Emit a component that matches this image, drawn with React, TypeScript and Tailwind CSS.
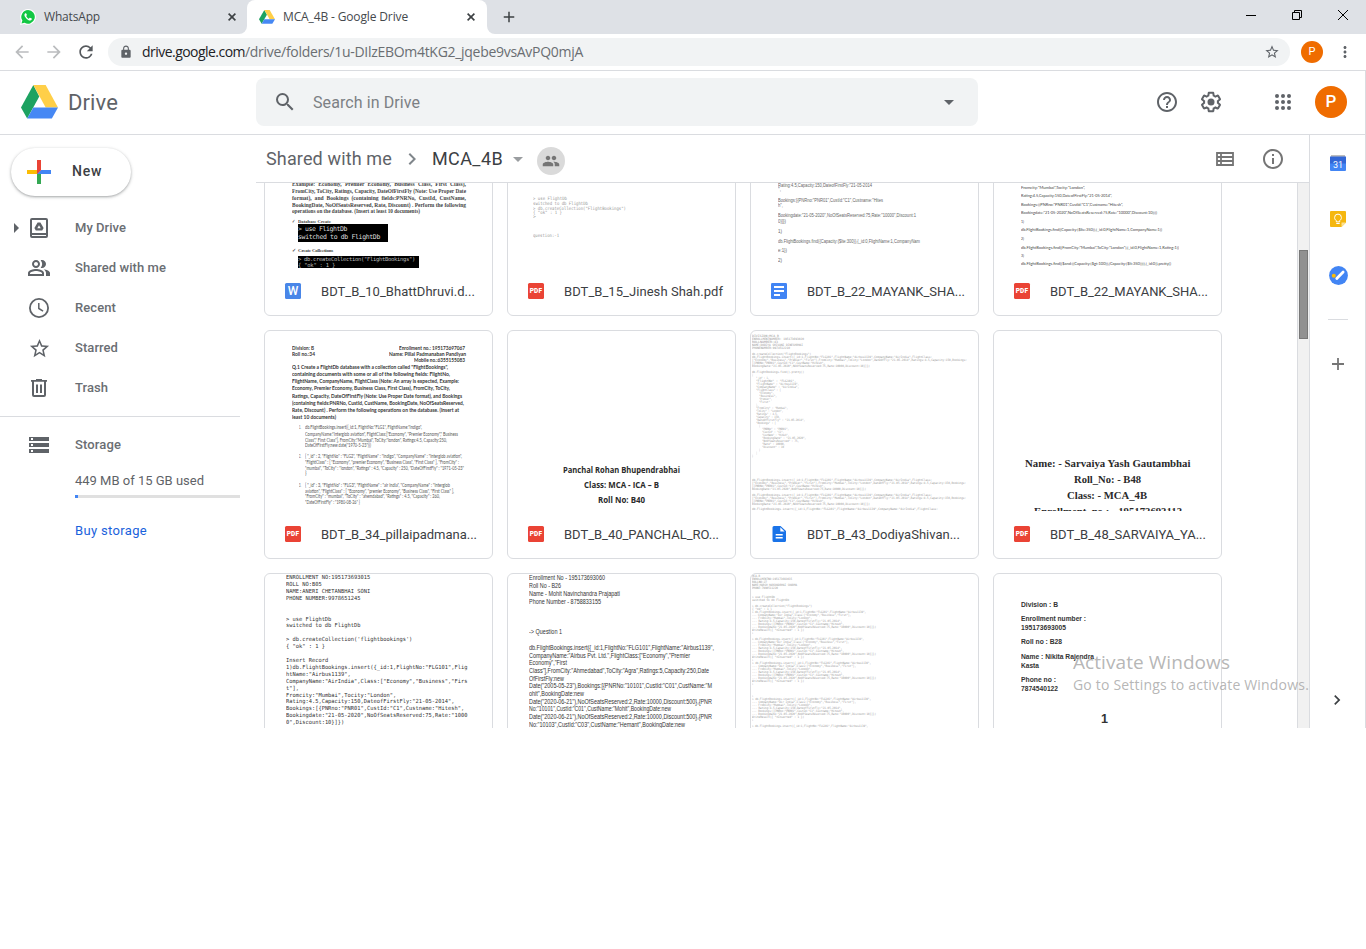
import { useLayoutEffect, useRef, type ReactNode } from "react";
import {
  MdAdd,
  MdArrowBack,
  MdArrowDropDown,
  MdArrowForward,
  MdChevronRight,
  MdHelpOutline,
  MdLock,
  MdMoreVert,
  MdOutlineInfo,
  MdOutlinePeopleAlt,
  MdPeople,
  MdRefresh,
  MdSearch,
  MdStarBorder,
  MdStorage,
} from "react-icons/md";

type FitMode = "track" | "scale" | "words";

/** A single line of text fitted to a given width by tracking, scaling or word spacing. */
function Fit({
  w,
  className = "",
  mode = "track",
  children,
}: {
  w: number;
  className?: string;
  mode?: FitMode;
  children: string;
}) {
  const ref = useRef<HTMLSpanElement>(null);
  useLayoutEffect(() => {
    const el = ref.current;
    if (!el) return;
    el.style.letterSpacing = "0px";
    el.style.wordSpacing = "0px";
    el.style.transform = "none";
    const natural = el.getBoundingClientRect().width;
    const spaces = children.split(" ").length - 1;
    if (mode === "words" && spaces > 0 && natural < w) el.style.wordSpacing = `${(w - natural) / spaces}px`;
    else if (mode !== "track") el.style.transform = `scaleX(${w / natural})`;
    else el.style.letterSpacing = `${(w - natural) / children.length}px`;
  }, [w, mode, children]);
  return (
    <span ref={ref} className={`inline-block origin-left whitespace-pre ${className}`}>
      {children}
    </span>
  );
}

/** [centre y, x, width, text, extra classes] */
type Line = [number, number, number, string, string?];

function Doc({ lines, lh, className, mode = "scale" }: { lines: Line[]; lh: number; className: string; mode?: FitMode }) {
  let bottom = 0;
  return (
    <div className={`flow-root h-[180px] w-full overflow-hidden ${className}`}>
      {lines.map(([y, x, w, text, extra], i) => {
        const top = y - lh / 2;
        const gap = top - bottom;
        bottom = top + lh;
        return (
          <div key={i} className="flex" style={{ marginTop: gap, marginLeft: x, height: lh, lineHeight: `${lh}px` }}>
            <Fit w={w} mode={mode} className={extra}>
              {text}
            </Fit>
          </div>
        );
      })}
    </div>
  );
}

const bhatt: Line[] = [
  [96.5, 27, 174, "Example: Economy, Premier Economy, Business Class, First Class),"],
  [103, 27, 174, "FromCity, ToCity, Ratings, Capacity, DateOfFirstFly (Note: Use Proper Date"],
  [110, 27, 174, "format), and Bookings (containing fields:PNRNo, CustId, CustName,"],
  [117, 27, 174, "BookingDate, NoOfSeatsReserved, Rate, Discount) . Perform the following"],
  [123.5, 27, 128, "operations on the database. (Insert at least 10 documents)"],
  [133.5, 27, 3, "✓", "text-[5px]"],
  [133.5, 33, 33, "Database Create", "text-[5px]"],
];

const jinesh: Line[] = [
  [110, 25, 34, "> use FlightDb"],
  [115, 25, 55, "switched to db FlightDb"],
  [120, 25, 93, '> db.createCollection("FlightBookings")'],
  [124, 25, 29, '{ "ok" : 1 }'],
  [128.5, 25, 3, ">"],
  [147, 25, 26, "question:-1"],
];

const mayankDoc: Line[] = [
  [97, 26.5, 94, 'Rating:4.5,Capacity:150,DateofFirstFly:"21-05-2014'],
  [101.5, 26.5, 3, '",'],
  [112, 26.5, 105, 'Bookings:[{PNRno:"PNR01",CustId:"C1",Custname:"Hites'],
  [117, 26.5, 5, 'h",'],
  [127.5, 26.5, 138, 'Bookingdate:"21-05-2020",NoOfSeatsReserved:75,Rate:"10000",Discount:1'],
  [133, 26.5, 8, "0}]})"],
  [143, 26.5, 4, "1)"],
  [153, 26.5, 142, "db.FlightBookings.find({Capacity:{$lte:300}},{_id:0,FlightName:1,CompanyNam"],
  [162.5, 26.5, 9, "e:1})"],
  [172, 26.5, 4, "2)"],
];

const mayankPdf: Line[] = [
  [99, 27, 64, 'Fromcity:"Mumbai",Tocity:"London",'],
  [107.5, 27, 91, 'Rating:4.5,Capacity:150,DateofFirstFly:"21-05-2014",'],
  [116, 27, 102, 'Bookings:[{PNRno:"PNR01",CustId:"C1",Custname:"Hitesh",'],
  [124.5, 27, 136, 'Bookingdate:"21-05-2020",NoOfSeatsReserved:75,Rate:"10000",Discount:10}]})'],
  [133, 27, 3, "1)"],
  [141.5, 27, 141, "db.FlightBookings.find({Capacity:{$lte:350}},{_id:0,FlightName:1,CompanyName:1})"],
  [150, 27, 3, "2)"],
  [159, 27, 158, 'db.FlightBookings.find({FromCity:"Mumbai",ToCity:"London"},{_id:0,FlightName:1,Rating:1})'],
  [167, 27, 3, "3)"],
  [175.5, 27, 150, "db.FlightBookings.find({$and:[{Capacity:{$gt:100}},{Capacity:{$lt:350}}]},{_id:0}).pretty()"],
];

const thin = "font-normal text-[5px] text-[#555]";

const pillai: Line[] = [
  [17, 26.5, 22, "Division: B"],
  [17, 134, 66, "Enrollment no.: 195173697067"],
  [23.3, 26.5, 23, "Roll no.:34"],
  [23.3, 123.7, 77, "Name: Pillai Padmanaban Pandiyan"],
  [29.3, 149, 51, "Mobile no.:6355155083"],
  [36, 26.5, 156, 'Q.1 Create a FlightDb database with a collection called "FlightBookings",'],
  [43, 26.5, 158, "containing documents with some or all of the following fields: FlightNo,"],
  [50.3, 26.5, 167, "FlightName, CompanyName, FlightClass (Note: An array is expected, Example:"],
  [57.3, 26.5, 158, "Economy, Premier Economy, Business Class, First Class), FromCity, ToCity,"],
  [65, 26.5, 170, "Ratings, Capacity, DateOfFirstFly (Note: Use Proper Date format), and Bookings"],
  [72, 26.5, 172, "(containing fields:PNRNo, CustId, CustName, BookingDate, NoOfSeatsReserved,"],
  [79.3, 26.5, 167, "Rate, Discount) . Perform the following operations on the database. (Insert at"],
  [87, 26.5, 44, "least 10 documents)"],
  [97, 34, 2, "1.", thin],
  [97, 39.7, 117, 'db.FlightBookings.insert({_id:1, FlightNo:"FLG1", FlightName:"Indigo",', thin],
  [103.3, 39.7, 153, 'CompanyName:"Interglob aviation", FlightClass:["Economy", "Premier Economy"," Business', thin],
  [109.3, 39.7, 142, 'Class"," First Class"], FromCity:"Mumbai", ToCity:"london", Ratings:4.5, Capacity:250,', thin],
  [114.5, 39.7, 66, 'DateOfFirstFly:new date("1970-5-23")})', thin],
  [125.7, 34, 2, "2.", thin],
  [125.7, 39.7, 157, '{ "_id" : 2, "FlightNo" : "FLG2", "FlightName" : "Indigo", "CompanyName" : "Interglob aviation",', thin],
  [131.3, 39.7, 154, '"FlightClass" : [ "Economy", "premier Economy", "Business Class", "First Class" ], "FromCity" :', thin],
  [137, 39.7, 159, '"mumbai", "ToCity" : "london", "Ratings" : 4.5, "Capacity" : 250, "DateOfFirstFly" : "1971-05-23"', thin],
  [142.7, 39.7, 1.5, "}", thin],
  [154.7, 34, 2, "3.", thin],
  [154.7, 39.7, 145, '{ "_id" : 3, "FlightNo" : "FLG3", "FlightName" : "air India", "CompanyName" : "Interglob', thin],
  [160, 39.7, 149, 'aviation", "FlightClass" : [ "Economy", "premier Economy", "Business Class", "First Class" ],', thin],
  [165.7, 39.7, 135, '"FromCity" : "mumbai", "ToCity" : "ahemdabad", "Ratings" : 4.5, "Capacity" : 260,', thin],
  [171.3, 39.7, 55, '"DateOfFirstFly" : "1980-08-26" }', thin],
];

const panchal: Line[] = [
  [139, 55, 117, "Panchal Rohan Bhupendrabhai"],
  [154, 75.5, 75, "Class: MCA - ICA – B"],
  [169, 90, 47, "Roll No: B40"],
];

const insertA = 'db.FlightBookings.insert({_id:1,FlightNo:"FLG101",FlightName:"Airbus1139",CompanyName:"AirIndia",FlightClass:';
const insertB =
  '["Economy","Business","Premier","First"],FromCity:"Mumbai",ToCity:"London",DateOfFly:"21-05-2014",Ratings:4.5,Capacity:150,Bookings:';
const insertC = '[{PNRNo:"PNR01",CustId:"C1",CustName:"Hitesh",';
const insertD = 'BookingDate:"21-05-2020",NoOfSeatsReserved:75,Rate:10000,Discount:10}]})';

const dodiya: Line[] = [
  [5.3, 1.3, 27, "DIVISION:MCA_B"],
  [8.3, 1.3, 52, "ENROLLMENTNUMBER: 195173693020"],
  [11.3, 1.3, 26, "ROLLNUMBER:43"],
  [14.7, 1.3, 51, "NAME:DODIYA SHIVANI DINESHBHAI"],
  [17.7, 1.3, 38, "PHONENUMBER:9974512210"],
  [23.3, 1.3, 59, 'db.createCollection("FlightBookings")'],
  [26.3, 1.3, 180, insertA],
  [29.3, 1.3, 215, insertB],
  [32.3, 1.3, 73, insertC],
  [35.7, 1.3, 118, insertD],
  [41.3, 1.3, 52, "db.FlightBookings.find().pretty()"],
  [44.3, 1.3, 1, "{"],
  [47.3, 4.7, 13, '"_id" : 1,'],
  [50.3, 4.7, 40, '"FlightNo" : "FLG101",'],
  [53.3, 4.7, 43, '"FlightName" : "Airbus1139",'],
  [56.3, 4.7, 43, '"CompanyName" : "AirIndia",'],
  [59.3, 4.7, 25, '"FlightClass" : ['],
  [62.3, 8, 15, '"Economy",'],
  [65.3, 8, 18, '"Business",'],
  [68.3, 8, 13, '"Premier",'],
  [71.3, 8, 11, '"First"'],
  [74.3, 4.7, 2, "],"],
  [77.3, 4.7, 32, '"FromCity" : "Mumbai",'],
  [80.3, 4.7, 27, '"ToCity" : "London",'],
  [83.3, 4.7, 22, '"Ratings" : 4.5,'],
  [86.3, 4.7, 24, '"Capacity" : 150,'],
  [89.3, 4.7, 49, '"DateOfFirstFly" : "21-05-2014",'],
  [92.3, 4.7, 20, '"Bookings" : ['],
  [95.3, 8, 1, "{"],
  [98.3, 11.3, 27, '"PNRNo" : "PNR01",'],
  [101.3, 11.3, 22, '"CustId" : "C1",'],
  [104.3, 11.3, 27, '"CustName" : "Hitesh",'],
  [107.3, 11.3, 44, '"BookingDate" : "21-05-2020",'],
  [110.3, 11.3, 37, '"NoOfSeatsReserved" : 75,'],
  [113.3, 11.3, 23, '"Rate" : 10000,'],
  [116.3, 11.3, 22, '"Discount" : 10'],
  [119.3, 8, 1, "}"],
  [122.3, 4.7, 1, "]"],
  [125.3, 1.3, 1, "}"],
  [149.3, 1.3, 180, insertA],
  [152.3, 1.3, 214, insertB],
  [155.3, 1.3, 73, insertC],
  [158.3, 1.3, 114, insertD],
  [164.3, 1.3, 180, insertA],
  [167.3, 1.3, 214, insertB],
  [170.3, 1.3, 73, insertC],
  [173.3, 1.3, 118, insertD],
  [178.3, 1.3, 186, insertA],
];

const sarvaiya: Line[] = [
  [131.5, 30.7, 165.5, "Name: - Sarvaiya Yash Gautambhai"],
  [147.5, 80, 67, "Roll_No: - B48"],
  [164, 73.3, 80, "Class: - MCA_4B"],
  [180, 40, 148, "Enrollment_no.: - 195173693113"],
];

const aneri: Line[] = (
  [
    [3.3, "ENROLLMENT NO:195173693015"],
    [10, "ROLL NO:B05"],
    [17, "NAME:ANERI CHETANBHAI SONI"],
    [24, "PHONE NUMBER:9978651245"],
    [45, "> use FlightDb"],
    [51.7, "switched to db FlightDb"],
    [65.3, "> db.createCollection('flightbookings')"],
    [72.7, '{ "ok" : 1 }'],
    [86.3, "Insert Record"],
    [93.3, '1)db.FlightBookings.insert({_id:1,FlightNo:"FLG101",Flig'],
    [100, 'htName:"Airbus1139",'],
    [107, 'CompanyName:"AirIndia",Class:["Economy","Business","Firs'],
    [114, 't"],'],
    [121, 'Fromcity:"Mumbai",Tocity:"London",'],
    [127.7, 'Rating:4.5,Capacity:150,DateofFirstFly:"21-05-2014",'],
    [134.7, 'Bookings:[{PNRno:"PNR01",CustId:"C1",Custname:"Hitesh",'],
    [141.7, 'Bookingdate:"21-05-2020",NoOfSeatsReserved:75,Rate:"1000'],
    [148.7, '0",Discount:10}]})'],
  ] as [number, string][]
).map(([y, t]) => [y, 21, t.length * 3.24, t]);

const mohit: Line[] = [
  [4, 21, 76, "Enrollment No - 195173693060"],
  [12, 21, 32, "Roll No - B26"],
  [20, 21, 91, "Name - Mohit Navinchandra Prajapati"],
  [27.7, 21, 72, "Phone Number - 8758833155"],
  [58.3, 21, 33, "-> Question 1"],
  [74, 21, 185, 'db.FlightBookings.insert({_id:1,FlightNo:"FLG101",FlightName:"Airbus1139",'],
  [81.7, 21, 161, 'CompanyName:"Airbus Pvt. Ltd.",FlightClass:["Economy","Premier'],
  [89.3, 21, 38, 'Economy","First'],
  [97, 21, 180, 'Class"],FromCity:"Ahmedabad",ToCity:"Agra",Ratings:5,Capacity:250,Date'],
  [104.7, 21, 35, "OfFirstFly:new"],
  [112.3, 21, 183, 'Date("2005-05-23"),Bookings:[{PNRNo:"10101",CustId:"C01",CustName:"M'],
  [120.3, 21, 55, 'ohit",BookingDate:new'],
  [127.7, 21, 183, 'Date("2020-06-21"),NoOfSeatsReserved:2,Rate:10000,Discount:500},{PNR'],
  [135.3, 21, 142, 'No:"10101",CustId:"C01",CustName:"Mohit",BookingDate:new'],
  [143, 21, 183, 'Date("2020-06-21"),NoOfSeatsReserved:2,Rate:10000,Discount:500},{PNR'],
  [150.5, 21, 156, 'No:"10103",CustId:"C03",CustName:"Hemant",BookingDate:new'],
];

function shellBlock(y: number, head: number): Line[] {
  return [
    [y, 1.3, head, '> db.FlightBookings.insert({_id:1,FlightNo:"FLG101",FlightName:"Airbus1139",'],
    [y + 3, 1.3, head - 15, '... CompanyName:"Air India",Class:["Economy","Business","First"],'],
    [y + 6, 1.3, 60, '... FromCity:"Mumbai",ToCity:"London",'],
    [y + 9, 1.3, 90, '... Rating:4.5,Capacity:150,DateofFirstFly:"21-05-2014",'],
    [y + 12, 1.3, 92, '... Bookings:[{PNRno:"PNR01",CustId:"C1",Custname:"Hitesh",'],
    [y + 15, 1.3, 124, '... Bookingdate:"21-05-2020",NoOfSeatsReserved:75,Rate:"10000",Discount:10}]})'],
    [y + 18, 1.3, 52, 'WriteResult({ "nInserted" : 1 })'],
    [y + 21, 1.3, 1, ">"],
  ];
}

const shellLog: Line[] = [
  [2.3, 1.3, 8, "MCA-B"],
  [5.3, 1.3, 40, "ENROLLMENTNO:195173693035"],
  [8.3, 1.3, 15, "ROLLNO:27"],
  [11.3, 1.3, 45, "NAME:HARSH HARSHADBHAI SHARMA"],
  [14.3, 1.3, 26, "PHONE:7990511220"],
  [23.3, 1.3, 23, "> use FlightDb"],
  [26.3, 1.3, 37, "switched to db FlightDb"],
  [32.3, 1.3, 60, '> db.createCollection("FlightBookings")'],
  [35.3, 1.3, 20, '{ "ok" : 1 }'],
  ...shellBlock(38.3, 114),
  ...shellBlock(65.3, 112),
  ...shellBlock(89.3, 119),
  [122.3, 1.3, 1, ">"],
  ...shellBlock(125.3, 119),
  ...shellBlock(152.3, 116).slice(0, 1),
];

const nikita: Line[] = [
  [30.7, 26.7, 37, "Division : B"],
  [45, 26.7, 65, "Enrollment number :"],
  [54.3, 26.7, 45, "195173693005"],
  [68.3, 26.7, 41, "Roll no : B28"],
  [82.7, 26.7, 73, "Name : Nikita Rajendra"],
  [92, 26.7, 18, "Kasta"],
  [106, 26.7, 35, "Phone no :"],
  [115, 26.7, 37, "7874540122"],
  [145.5, 107, 7, "1", "text-[13px]"],
];

type Kind = "word" | "pdf" | "gdoc" | "gdoc2";

function FileIcon({ kind }: { kind: Kind }) {
  if (kind === "gdoc2")
    return (
      <svg width="16" height="16" viewBox="0 0 16 16">
        <path d="M3 0h6.5L15 5v9.5a1.500 1.500 0 0 1-1.500 1.500h-10.500a1.500 1.500 0 0 1-1.500-1.500v-13A1.500 1.500 0 0 1 3 0z" fill="#1a73e8" />
        <path d="M9.300 1.200V5.500h4.300z" fill="#fff" />
        <path d="M4.700 8h7v1.400h-7zM4.700 11h7v1.400h-7z" fill="#fff" />
      </svg>
    );
  if (kind === "gdoc")
    return (
      <svg width="16" height="16" viewBox="0 0 16 16">
        <rect width="16" height="16" rx="1.2" fill="#4285f4" />
        <path d="M3 3h10v2H3zM3 7h10v2H3zM3 11h6v2H3z" fill="#fff" />
      </svg>
    );
  if (kind === "word")
    return (
      <span className="flex size-4 items-center justify-center rounded-[1.5px] bg-[#4986e8] text-[12px] leading-4 font-medium text-white">
        W
      </span>
    );
  return (
    <span className="flex size-4 items-center justify-center rounded-[1.5px] bg-[#ea4335] text-[6.5px] leading-4 font-black tracking-[0.2px] text-white">
      PDF
    </span>
  );
}

function Card({ kind, name, w, children }: { kind: Kind; name: string; w: number; children: ReactNode }) {
  return (
    <div className="h-[229px] w-[229px] overflow-hidden rounded-[6px] border border-[#dadce0] bg-white">
      {children}
      <div className="flex h-[47px] items-start pt-[15px] pl-5">
        <FileIcon kind={kind} />
        <Fit w={w} className="ml-5 text-[13px] leading-[18px] text-[#3c4043]">
          {name}
        </Fit>
      </div>
    </div>
  );
}

const mono = "font-['DejaVu_Sans_Mono',monospace]";

function DriveMark({ width, height }: { width: number; height: number }) {
  return (
    <svg width={width} height={height} viewBox="0 0 36 34" preserveAspectRatio="none">
      <path d="M12 0L0 22.500 6 33.500 17.800 11.500z" fill="#1da261" />
      <path d="M12 0h12l12 22.500H24z" fill="#ffcf48" />
      <path d="M12 22.500h24L30 33.500H6z" fill="#4688f4" />
    </svg>
  );
}

function CloseGlyph({ className }: { className: string }) {
  return (
    <svg className={className} width="8" height="8" viewBox="0 0 8 8">
      <path d="M.6.6l6.800 6.800M7.400.6L.6 7.400" stroke="#3c4043" strokeWidth="1.600" />
    </svg>
  );
}

function NavRow({ icon, label, w }: { icon: ReactNode; label: string; w: number }) {
  return (
    <div className="flex h-10 items-center pl-[27px]">
      <span className="flex w-6 justify-center">{icon}</span>
      <Fit w={w} className="ml-6 text-[13px] font-medium text-[#6a6e73]">
        {label}
      </Fit>
    </div>
  );
}

function BrowserChrome() {
  return (
    <div className="font-['Open_Sans',sans-serif]">
      <div className="flex h-[34px] bg-[#dee1e6] text-[12px] text-[#45494d]">
        <div className="flex w-[239px] items-center pl-5">
          <svg width="16" height="16" viewBox="0 0 16 16">
            <path d="M8.100 0a7.900 7.900 0 1 1-3.700 14.900L0 16l1.200-4.200A7.900 7.900 0 0 1 8.100 0z" fill="#fff" />
            <path d="M8.100 1.100a6.800 6.800 0 1 1-3.500 12.700L1.500 14.600l.9-3A6.800 6.800 0 0 1 8.100 1.100z" fill="#12c743" />
            <path
              d="M5.800 4.200c-.3 0-.5.1-.8.4-.9 1-.6 2.200 0 3.200a8.200 8.200 0 0 0 4 3.600c1.200.4 2.300.2 2.700-.8.200-.6.200-1 0-1.100l-1.700-.8c-.2-.1-.4 0-.5.200l-.6.7c-.2.200-.3.200-.6.100A5.600 5.600 0 0 1 6.300 7.300c-.1-.2 0-.3.100-.5l.5-.7V5.800l-.7-1.400z"
              fill="#fff"
            />
          </svg>
          <Fit w={56} className="ml-2">
            WhatsApp
          </Fit>
          <CloseGlyph className="mr-[3px] ml-auto" />
        </div>
        <div className="flex items-end">
          <div className="size-2 bg-white">
            <div className="size-2 rounded-br-lg bg-[#dee1e6]" />
          </div>
          <div className="flex h-[34px] w-[240px] items-center rounded-t-lg bg-white pl-3">
            <DriveMark width={16} height={14} />
            <Fit w={125} className="ml-2">
              MCA_4B - Google Drive
            </Fit>
            <CloseGlyph className="mr-3 ml-auto" />
          </div>
          <div className="size-2 bg-white">
            <div className="size-2 rounded-bl-lg bg-[#dee1e6]" />
          </div>
        </div>
        <div className="flex items-center pl-[5px]">
          <MdAdd className="size-[18px] text-[#3c4043]" />
        </div>
        <div className="ml-auto flex h-[29px] items-center text-black">
          <svg width="104" height="12" viewBox="0 0 104 12" fill="none" stroke="#000" className="mr-[17px]">
            <path d="M1 6.500h10" />
            <path d="M47.500 3.500h7v7h-7zM49.500 3.500v-2h7v7h-2" />
            <path d="M93 1l10 10M103 1l-10 10" />
          </svg>
        </div>
      </div>
      <div className="flex h-9 items-center bg-white">
        <MdArrowBack className="ml-3 size-5 text-[#babcbe]" />
        <MdArrowForward className="ml-3 size-5 text-[#babcbe]" />
        <MdRefresh className="ml-3 size-5 text-[#55595d]" />
        <div className="ml-3 flex h-7 w-[1182px] items-center rounded-full bg-[#f1f3f4] pl-[11px]">
          <MdLock className="size-[14px] text-[#5f6368]" />
          <div className="mb-[2px] ml-[9px] flex text-[14px] text-[#6a6e72]">
            <Fit w={103} className="text-[#202124]">
              drive.google.com
            </Fit>
            <Fit w={338}>/drive/folders/1u-DIlzEBOm4tKG2_jqebe9vsAvPQ0mjA</Fit>
          </div>
          <MdStarBorder className="mr-[10px] ml-auto size-4 text-[#5f6368]" />
        </div>
        <span className="ml-[11px] flex size-[22px] items-center justify-center rounded-full bg-[#ef6c00] font-['Roboto',sans-serif] text-[11px] text-white">
          P
        </span>
        <MdMoreVert className="ml-[13px] size-[18px] text-[#5f6368]" />
      </div>
    </div>
  );
}

function DriveHeader() {
  return (
    <header className="flex h-16 items-center border-b border-[#dadce0] pb-[2px]">
      <div className="flex w-64 items-center pl-[21px]">
        <DriveMark width={37} height={34} />
        <Fit w={50} className="mt-[2px] ml-[10px] text-[22px] text-[#5f6368]">
          Drive
        </Fit>
      </div>
      <div className="flex h-12 w-[722px] items-center rounded-lg bg-[#f1f3f4] pl-[17px]">
        <MdSearch className="size-6 text-[#5f6368]" />
        <Fit w={107} className="mt-[2px] ml-4 text-[16px] text-[#7c8084]">
          Search in Drive
        </Fit>
        <MdArrowDropDown className="mr-[17px] ml-auto size-6 text-[#5f6368]" />
      </div>
      <MdHelpOutline className="ml-[177px] size-6 text-[#5f6368]" />
      <svg className="ml-5" width="24" height="24" viewBox="0 0 24 24" fill="#5f6368">
        <path d="M13.850 22.250h-3.700c-.74 0-1.360-.54-1.450-1.270l-.27-1.890c-.27-.14-.53-.29-.79-.46l-1.800.72c-.7.26-1.470-.03-1.810-.65L2.200 15.530c-.35-.66-.2-1.440.36-1.880l1.530-1.190c-.01-.15-.02-.3-.02-.46 0-.15.010-.31.020-.46l-1.520-1.190c-.59-.45-.74-1.260-.37-1.880l1.850-3.190c.34-.62 1.110-.9 1.790-.63l1.810.73c.26-.17.52-.32.78-.46l.27-1.910c.09-.7.710-1.250 1.440-1.250h3.700c.74 0 1.360.54 1.450 1.270l.27 1.890c.27.14.53.29.79.46l1.800-.72c.71-.26 1.480.03 1.820.65l1.840 3.180c.36.66.2 1.440-.36 1.880l-1.520 1.190c.01.15.02.3.02.46s-.01.310-.02.460l1.520 1.190c.56.45.72 1.230.37 1.860l-1.860 3.220c-.34.620-1.110.9-1.800.63l-1.800-.72c-.26.170-.52.320-.78.460l-.27 1.910c-.1.680-.72 1.220-1.460 1.220zm-3.230-2h2.760l.37-2.550.53-.22c.44-.18.88-.44 1.340-.78l.45-.34 2.380.96 1.380-2.400-2.030-1.580.07-.56c.03-.26.06-.510.06-.78s-.03-.53-.06-.78l-.07-.56 2.030-1.580-1.390-2.400-2.390.96-.45-.35c-.42-.32-.87-.58-1.330-.77l-.52-.22-.37-2.550h-2.760l-.37 2.550-.53.210c-.44.190-.88.440-1.340.79l-.45.330-2.380-.95-1.390 2.390 2.030 1.580-.07.56a7 7 0 0 0-.06.79c0 .26.020.53.060.78l.07.56-2.030 1.580 1.380 2.400 2.390-.96.45.350c.43.330.86.580 1.330.77l.53.220.38 2.550z" />
        <circle cx="12" cy="12" r="3.500" />
      </svg>
      <svg className="ml-[52px]" width="16" height="16" viewBox="0 0 16 16" fill="#5f6368">
        {[2, 8, 14].map((cy) => [2, 8, 14].map((cx) => <circle key={`${cx}-${cy}`} cx={cx} cy={cy} r="2" />))}
      </svg>
      <span className="ml-6 flex size-8 items-center justify-center rounded-full bg-[#ef6c00] pt-px text-[17px] font-medium text-white">
        P
      </span>
    </header>
  );
}

function Sidebar() {
  return (
    <nav className="flex w-64 flex-col">
      <div className="mt-[13px] ml-[11px] flex h-12 w-[120px] items-center rounded-full bg-white pl-4 shadow-[0_1px_2px_rgba(60,64,67,0.3),0_1px_3px_1px_rgba(60,64,67,0.15)]">
        <svg width="24" height="24" viewBox="0 0 24 24">
          <path d="M10 0h4v10l-4 4z" fill="#ea4335" />
          <path d="M0 10h12l-2 4H0z" fill="#fbbc04" />
          <path d="M10 14l4-3v13h-4z" fill="#34a853" />
          <path d="M14 10h10v4H10z" fill="#4285f4" />
          <path d="M10 10h4l-4 4z" fill="#ea4335" />
        </svg>
        <Fit w={30} className="mb-[2px] ml-[21px] text-[14px] font-medium text-[#3c4043]">
          New
        </Fit>
      </div>
      <div className="mt-[12px] flex">
        <svg className="mt-[15px] ml-[14px] -mr-[20px]" width="6" height="10" viewBox="0 0 6 10">
          <path d="M0 0l5 5-5 5z" fill="#5f6368" />
        </svg>
        <NavRow
          label="My Drive"
          w={51}
          icon={
            <svg width="18" height="20" viewBox="0 0 18 20" fill="none" stroke="#5f6368">
              <rect x="1" y="1" width="16" height="18" rx="1" strokeWidth="2" />
              <path d="M1 16h16" strokeWidth="2" />
              <path d="M7.600 4.500h2.800l3.200 5.500-1.400 2.500H5.800L4.400 10z" fill="#5f6368" stroke="none" />
              <path d="M9 7.200l1.700 3H7.300z" fill="#fff" stroke="none" />
            </svg>
          }
        />
      </div>
      <NavRow label="Shared with me" w={91} icon={<MdOutlinePeopleAlt className="size-6 text-[#5f6368]" />} />
      <NavRow
        label="Recent"
        w={41}
        icon={
          <svg width="20" height="20" viewBox="0 0 20 20" fill="none" stroke="#5f6368">
            <circle cx="10" cy="10" r="9.100" strokeWidth="1.800" />
            <path d="M9.800 5v5.500l4.300 2.600" strokeWidth="1.500" />
          </svg>
        }
      />
      <NavRow label="Starred" w={43} icon={<MdStarBorder className="size-[23px] text-[#5f6368]" />} />
      <NavRow
        label="Trash"
        w={33}
        icon={
          <svg width="16" height="18" viewBox="0 0 16 18" fill="none" stroke="#5f6368">
            <path d="M0 1.900h16M5 .8h6" strokeWidth="1.800" />
            <path d="M2 2v14a1 1 0 0 0 1 1h10a1 1 0 0 0 1-1V2" strokeWidth="2" />
            <path d="M6 5.500v8.500M10 5.500v8.500" strokeWidth="2" />
          </svg>
        }
      />
      <div className="mt-2 w-[240px] border-t border-[#dadce0]" />
      <div className="mt-2">
        <NavRow label="Storage" w={46} icon={<MdStorage className="size-6 text-[#5f6368]" />} />
      </div>
      <div className="ml-[75px] w-[165px]">
        <div className="flex h-[30px] items-center pt-[2px]">
          <Fit w={129} className="text-[13px] text-[#5f6368]">
            449 MB of 15 GB used
          </Fit>
        </div>
        <div className="h-[3px] bg-[#e0e0e0]">
          <div className="h-[3px] w-[3px] bg-[#4285f4]" />
        </div>
        <Fit w={72} className="mt-[23px] text-[13px] text-[#1a62dc]">
          Buy storage
        </Fit>
      </div>
    </nav>
  );
}

function FileArea() {
  return (
    <main className="flex w-[1053px] flex-col">
      <div className="flex h-12 shrink-0 items-center border-b border-[#dadce0] pl-[10px]">
        <Fit w={126} className="text-[18px] text-[#5f6368]">
          Shared with me
        </Fit>
        <MdChevronRight className="ml-[8px] size-6 text-[#80868b]" />
        <Fit w={71} className="ml-[8px] text-[18px] text-[#3c4043]">
          MCA_4B
        </Fit>
        <MdArrowDropDown className="ml-[3px] size-6 text-[#9a9da0]" />
        <span className="mt-[4px] ml-[7px] flex size-7 items-center justify-center rounded-full bg-[#dadada]">
          <MdPeople className="size-[18px] text-[#757575]" />
        </span>
        <svg className="ml-auto" width="18" height="14" viewBox="0 0 18 14" fill="none" stroke="#757575" strokeWidth="1.800">
          <path d="M1 1h16v12H1zM1 5h16M1 9h16M5 1v12" />
        </svg>
        <MdOutlineInfo className="mr-[24px] ml-[27px] size-6 text-[#757575]" />
      </div>
      <div className="flex min-h-0 flex-1">
        <div className="min-w-0 flex-1 overflow-hidden pl-2">
          <div className="-mt-24 grid grid-cols-[repeat(4,229px)] gap-[14px]">
            <Card kind="word" name="BDT_B_10_BhattDhruvi.d..." w={154}>
              <div className="h-[180px] overflow-hidden">
                <div className="h-[136px]">
                  <Doc mode="words" lines={bhatt} lh={7} className="font-['Liberation_Serif',serif] text-[5.600px] font-bold text-[#444]" />
                </div>
                <div className={`ml-[33px] flex h-[18px] w-[90px] flex-col items-start justify-evenly bg-black text-[6.500px] leading-2 text-[#ddd] ${mono}`}>
                  <Fit w={49}>{"> use FlightDb"}</Fit>
                  <Fit w={82}>switched to db FlightDb</Fit>
                </div>
                <div className="ml-[27px] flex h-[14px] items-center gap-[3px] pt-[4px] font-['Liberation_Serif',serif] text-[5px] font-bold text-[#444]">
                  <Fit w={3}>✓</Fit>
                  <Fit w={35}>Create Collections</Fit>
                </div>
                <div className={`ml-[33px] flex h-[12px] w-[121px] flex-col items-start bg-black text-[5.500px] leading-[6px] text-[#bbb] ${mono}`}>
                  <Fit w={117}>{'> db.createCollection("FlightBookings")'}</Fit>
                  <Fit w={37}>{'{ "ok" : 1 }'}</Fit>
                </div>
              </div>
            </Card>
            <Card kind="pdf" name="BDT_B_15_Jinesh Shah.pdf" w={159}>
              <Doc lines={jinesh} lh={5} className={`text-[4.500px] text-[#999] ${mono}`} />
            </Card>
            <Card kind="gdoc" name="BDT_B_22_MAYANK_SHA..." w={158}>
              <Doc lines={mayankDoc} lh={5} className="font-['Liberation_Sans',sans-serif] text-[5px] text-[#666]" />
            </Card>
            <Card kind="pdf" name="BDT_B_22_MAYANK_SHA..." w={158}>
              <Doc lines={mayankPdf} lh={5} className="font-['Lato',sans-serif] text-[4.500px] text-[#444]" />
            </Card>

            <Card kind="pdf" name="BDT_B_34_pillaipadmana..." w={156}>
              <Doc lines={pillai} lh={7} className="font-['Lato',sans-serif] text-[5.500px] font-bold text-[#333]" />
            </Card>
            <Card kind="pdf" name="BDT_B_40_PANCHAL_RO..." w={155}>
              <Doc lines={panchal} lh={10} className="font-['Open_Sans',sans-serif] text-[8px] font-bold text-[#2a2a2a]" />
            </Card>
            <Card kind="gdoc2" name="BDT_B_43_DodiyaShivan..." w={153}>
              <Doc lines={dodiya} lh={3} className={`text-[3px] text-[#999] ${mono}`} />
            </Card>
            <Card kind="pdf" name="BDT_B_48_SARVAIYA_YA..." w={156}>
              <Doc lines={sarvaiya} lh={14} className="font-['Liberation_Serif',serif] text-[11px] font-bold text-[#2a2a2a]" />
            </Card>

            <Card kind="pdf" name="BDT_B_05_ANERI_SONI.pdf" w={154}>
              <Doc lines={aneri} lh={7} className={`text-[5.600px] text-[#333] ${mono}`} />
            </Card>
            <Card kind="pdf" name="BDT_B_26_Mohit.pdf" w={120}>
              <Doc lines={mohit} lh={8} className="font-['Liberation_Sans',sans-serif] text-[6.500px] text-[#333]" />
            </Card>
            <Card kind="gdoc2" name="BDT_B_27_Harsh.txt" w={120}>
              <Doc lines={shellLog} lh={3} className={`text-[3px] text-[#999] ${mono}`} />
            </Card>
            <Card kind="pdf" name="BDT_B_28_Nikita.pdf" w={120}>
              <Doc lines={nikita} lh={8} className="font-['Liberation_Sans',sans-serif] text-[6.500px] font-bold text-[#333]" />
            </Card>
          </div>
        </div>
        <div className="w-3 border-l border-[#dadce0] bg-[#f1f1f1] pt-[67px] pl-px">
          <div className="h-[89px] w-[9px] border border-[#787878] bg-[#919191]" />
        </div>
      </div>
    </main>
  );
}

function SidePanel() {
  return (
    <aside className="flex w-14 flex-col items-center border-l border-[#dadce0]">
      <svg className="mt-5" width="16" height="16" viewBox="0 0 16 16">
        <path d="M1 0h14v3H1z" fill="#bdbdbd" />
        <path d="M0 1.500h16V9H0z" fill="#3367d6" />
        <path d="M0 8.500h16V15a1 1 0 0 1-1 1H1a1 1 0 0 1-1-1z" fill="#4285f4" />
        <text x="8" y="12.500" textAnchor="middle" fontSize="9" fill="#fff" fontFamily="Roboto">
          31
        </text>
      </svg>
      <svg className="mt-10" width="16" height="16" viewBox="0 0 16 16">
        <path d="M1 0h14a1 1 0 0 1 1 1v10.500L11.500 16H1a1 1 0 0 1-1-1V1a1 1 0 0 1 1-1z" fill="#f5b70f" />
        <path d="M16 11.500h-4.500V16z" fill="#fde293" />
        <path d="M6.300 9.500C5 8.800 4.600 7.800 4.600 6.500a3.400 3.400 0 0 1 6.800 0c0 1.300-.5 2.300-1.700 3v1.400H6.300zM6.300 12.500h3.400" fill="none" stroke="#fff" strokeWidth="1" />
      </svg>
      <svg className="mt-[39px] ml-px" width="19" height="19" viewBox="0 0 19 19">
        <circle cx="9.500" cy="9.500" r="9.400" fill="#4285f4" />
        <circle cx="4.800" cy="9.800" r="2" fill="#fbbc04" />
        <path d="M7.800 12.400l6.300-6.400" stroke="#fff" strokeWidth="2.800" strokeLinecap="round" />
      </svg>
      <div className="mt-[34px] w-5 border-t border-[#dadce0]" />
      <svg className="mt-[38px]" width="12" height="12" viewBox="0 0 12 12">
        <path d="M6 0v12M0 6h12" stroke="#757575" strokeWidth="1.800" />
      </svg>
      <MdChevronRight className="mt-auto mr-[2px] mb-[18px] size-[20px] text-[#3c4043]" />
    </aside>
  );
}

export default function App() {
  return (
    <div className="relative h-[949px] w-[1366px] overflow-hidden bg-white font-['Roboto',sans-serif]">
      <BrowserChrome />
      <div className="h-[658px] border-t border-r border-[#dadce0]">
        <DriveHeader />
        <div className="flex h-[593px]">
          <Sidebar />
          <FileArea />
          <SidePanel />
        </div>
      </div>
      <div className="absolute top-[649px] left-[1073px] font-['Open_Sans',sans-serif] text-[#a3a3a3]/80">
        <div className="h-[26px] text-[19px] leading-[26px]">
          <Fit w={157}>Activate Windows</Fit>
        </div>
        <div className="h-5 text-[14px] leading-5">
          <Fit w={236}>Go to Settings to activate Windows.</Fit>
        </div>
      </div>
    </div>
  );
}
